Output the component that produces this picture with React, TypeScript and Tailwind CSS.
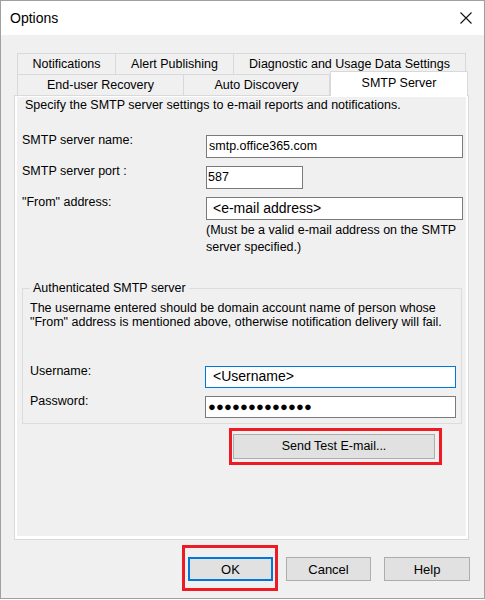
import React from "react";

function Tab({ w, label, first }: { w: string; label: string; first?: boolean }) {
  return (
    <div
      className={`${w} h-full flex items-center justify-center border-t border-r border-[#d9d9d9] ${first ? "border-l" : ""}`}
    >
      {label}
    </div>
  );
}

function Btn({ className, children }: { className: string; children: React.ReactNode }) {
  return (
    <div className={`flex items-center justify-center bg-[#e1e1e1] ${className}`}>{children}</div>
  );
}

export default function App() {
  return (
    <div className="w-[485px] h-[599px] bg-[#f0f0f0] border border-[#a0a0a0] flex flex-col text-[12.5px] leading-[15px] text-black font-['Liberation_Sans',Arial,sans-serif] overflow-hidden">
      {/* Title bar */}
      <div className="h-[34px] shrink-0 bg-white flex items-center justify-between pl-[9px] pr-[12px]">
        <span className="text-[14px]">Options</span>
        <svg width="12" height="12" viewBox="0 0 12 12">
          <path d="M0.5 0.5 L11.5 11.5 M11.5 0.5 L0.5 11.5" stroke="#111" strokeWidth="1.1" fill="none" />
        </svg>
      </div>

      {/* Body */}
      <div className="pl-[13px] pt-[18px] flex flex-col">
        {/* Tab row 1 */}
        <div className="flex ml-[3px] h-[21px]">
          <Tab w="w-[99px]" label="Notifications" first />
          <Tab w="w-[118px]" label="Alert Publishing" />
          <Tab w="w-[232px]" label="Diagnostic and Usage Data Settings" />
        </div>
        {/* Tab row 2 */}
        <div className="flex ml-[3px] h-[21px] items-end">
          <Tab w="w-[167px]" label="End-user Recovery" first />
          <Tab w="w-[146px]" label="Auto Discovery" />
          <div className="relative z-10 w-[138px] h-[25px] mb-[-1px] bg-white border-t border-l border-r border-[#d9d9d9] flex items-center justify-center pb-[2px]">
            SMTP Server
          </div>
        </div>

        {/* Panel */}
        <div className="w-[455px] h-[445px] border border-[#d9d9d9] bg-white pt-[1px] pl-[2px] pr-[2px] pb-[3px]">
          <div className="h-full bg-[#f0f0f0] flex flex-col">
            <p className="ml-[8px] mt-[0.5px]">
              Specify the SMTP server settings to e-mail reports and notifications.
            </p>

            <div className="flex ml-[5px] mt-[20px]">
              <div className="w-[184px]">SMTP server name:</div>
              <div className="mt-[2px] w-[257px] h-[23px] bg-white border border-[#7a7a7a] flex items-center pl-[2px]">
                smtp.office365.com
              </div>
            </div>
            <div className="flex ml-[5px] mt-[6px]">
              <div className="w-[184px]">SMTP server port :</div>
              <div className="mt-[2px] w-[97px] h-[23px] bg-white border border-[#7a7a7a] flex items-center pl-[1px]">
                587
              </div>
            </div>
            <div className="flex ml-[5px] mt-[6px]">
              <div className="w-[184px]">"From" address:</div>
              <div className="mt-[2px] w-[257px] h-[23px] bg-white border border-[#7a7a7a] flex items-center pl-[6px] text-[14px]">
                &lt;e-mail address&gt;
              </div>
            </div>
            <div className="ml-[189px] mt-[2.5px] leading-[17px]">
              (Must be a valid e-mail address on the SMTP
              <br />
              server specified.)
            </div>

            {/* Group box */}
            <fieldset className="ml-[5px] mt-[25px] w-[440px] border border-[#dcdcdc] pl-[7px] pr-[5px] pb-[5px]">
              <legend className="px-[3px] leading-[15px]">Authenticated SMTP server</legend>
              <div className="mt-[5px] leading-[14px]">
                The username entered should be domain account name of person whose
                <br />
                "From" address is mentioned above, otherwise notification delivery will fail.
              </div>
              <div className="flex mt-[34.5px]">
                <div className="w-[175px]">Username:</div>
                <div className="mt-[2px] w-[251px] h-[22px] bg-white border border-[#0078d7] flex items-center pl-[7px] text-[14px]">
                  &lt;Username&gt;
                </div>
              </div>
              <div className="flex mt-[6px]">
                <div className="w-[175px]">Password:</div>
                <div className="mt-[2px] w-[251px] h-[22px] bg-white border border-[#7a7a7a] flex items-center pl-[2px] text-[13px] tracking-[0.15px]">
                  ●●●●●●●●●●●●●
                </div>
              </div>
            </fieldset>

            <div className="ml-[212px] mt-[4px] w-[213px] h-[37px] border-[3px] border-[#ed1c24] pt-[3px] pl-[1px]">
              <Btn className="w-[202px] h-[25px] border border-[#adadad]">Send Test E-mail...</Btn>
            </div>
          </div>
        </div>

        {/* Bottom buttons */}
        <div className="flex items-start mt-[5px]">
          <div className="ml-[168px] w-[96px] h-[46px] border-[3px] border-[#ed1c24] pt-[9px] pl-[3px]">
            <Btn className="w-[85px] h-[24px] border-2 border-[#0078d7] text-[13px]">OK</Btn>
          </div>
          <Btn className="ml-[8px] mt-[12px] w-[85px] h-[24px] border border-[#adadad] text-[13px]">Cancel</Btn>
          <Btn className="ml-[13px] mt-[12px] w-[86px] h-[24px] border border-[#adadad] text-[13px]">Help</Btn>
        </div>
      </div>
    </div>
  );
}
